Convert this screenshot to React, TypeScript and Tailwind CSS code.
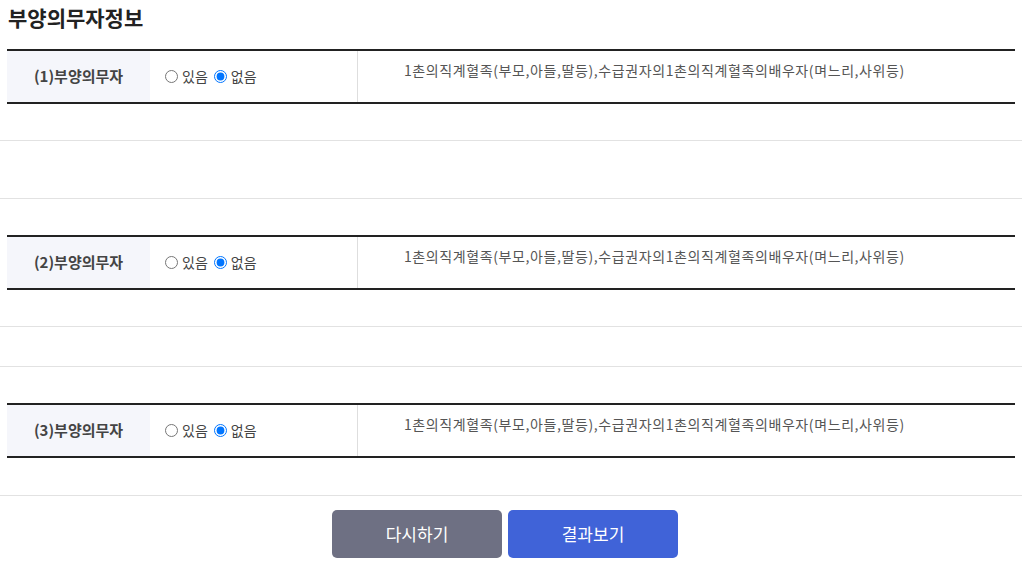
import React from 'react';

const rows = [
  { label: '(1)부양의무자', gaps: ['h-[37px]', 'h-[58px]'] },
  { label: '(2)부양의무자', gaps: ['h-[37px]', 'h-[40px]'] },
  { label: '(3)부양의무자', gaps: ['h-[38px]'] },
];

const desc = '1촌의직계혈족(부모,아들,딸등),수급권자의1촌의직계혈족의배우자(며느리,사위등)';

function Section({ idx, label, gaps }: { idx: number; label: string; gaps: string[] }) {
  return (
    <div>
      {/* 부양의무자 행 */}
      <div className="mx-[7px] flex h-[55px] border-y-2 border-[#222]">
        <div className="flex w-[143px] items-center justify-center bg-[#f5f6fb] text-[15px] font-semibold text-[#444]">
          {label}
        </div>
        <div className="flex w-[208px] items-center gap-[4px] border-r border-[#dedede] pl-[15px] text-[14px] text-[#444]">
          <input type="radio" name={`duty${idx}`} className="m-0 h-[13px] w-[13px]" />
          <span>있음</span>
          <input type="radio" name={`duty${idx}`} defaultChecked className="m-0 ml-[2px] h-[13px] w-[13px]" />
          <span>없음</span>
        </div>
        <div className="flex-1 pl-[46px] pt-[9px] text-[14px] leading-[20px] tracking-[0.6px] text-[#555]">{desc}</div>
      </div>
      {gaps.map((g, i) => (
        <div key={i} className={`${g} border-b border-[#e2e2e2]`} />
      ))}
    </div>
  );
}

export default function App() {
  return (
    <div className="h-[578px] w-[1022px] overflow-hidden bg-white font-['Noto_Sans_CJK_KR','Noto_Sans',sans-serif]">
      <h2 className="px-[8px] pt-[3px] text-[21px] font-bold leading-[28px] text-[#222]">부양의무자정보</h2>
      <div className="mt-[18px] flex flex-col gap-[36px]">
        {rows.map((r, i) => (
          <Section key={i} idx={i} label={r.label} gaps={r.gaps} />
        ))}
      </div>
      <div className="mt-[14px] flex justify-center gap-[6px] pr-[12px]">
        <button className="h-[48px] w-[170px] rounded-[5px] bg-[#6e7083] text-[17px] text-white">다시하기</button>
        <button className="h-[48px] w-[170px] rounded-[5px] bg-[#4063d8] text-[17px] text-white">결과보기</button>
      </div>
    </div>
  );
}
